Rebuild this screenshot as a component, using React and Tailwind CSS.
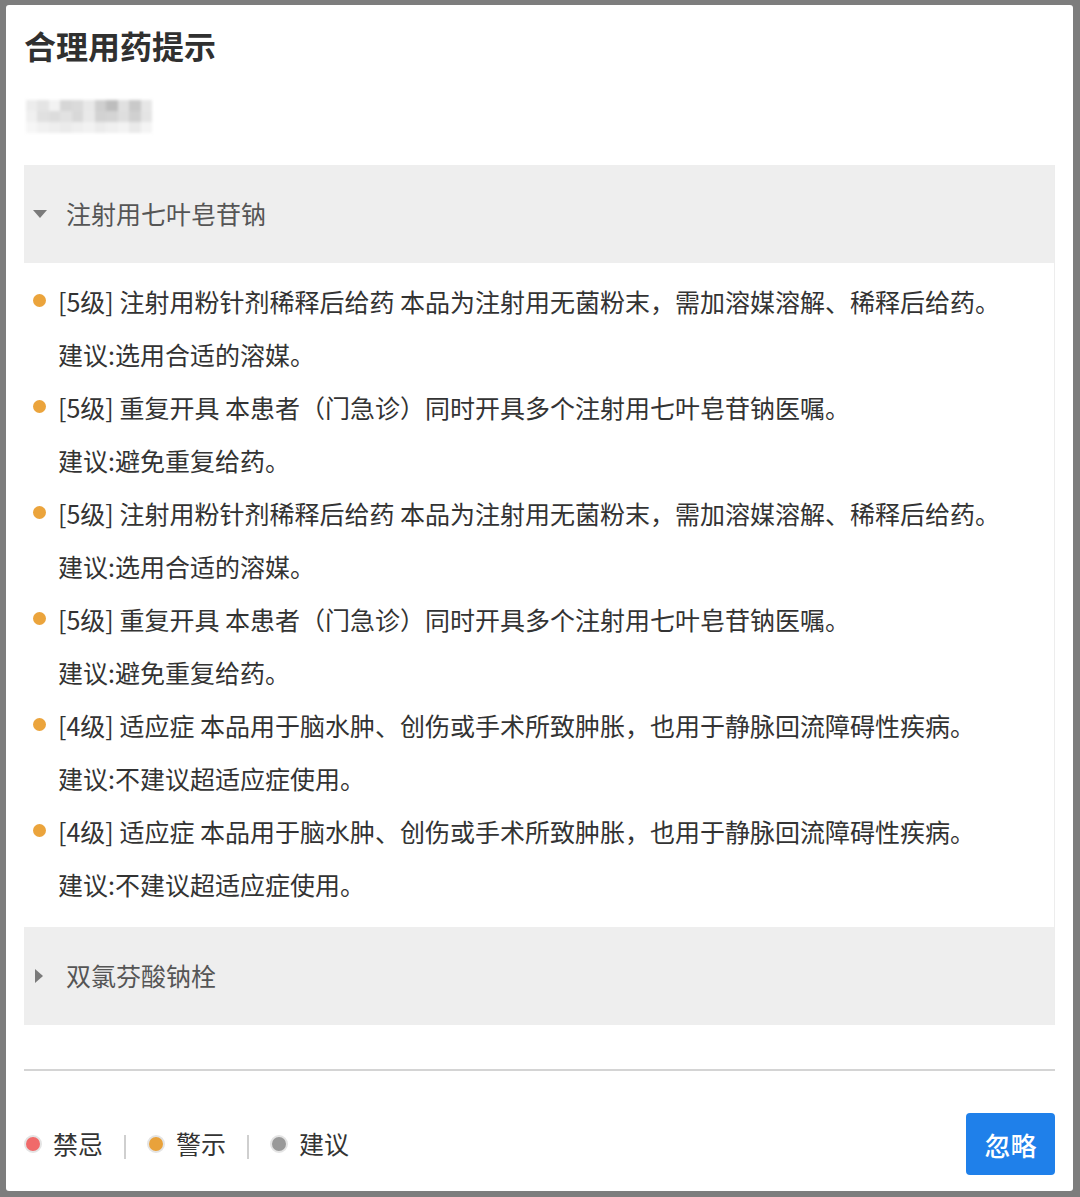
import React from "react";

const items = [
    { level: "5级", title: "注射用粉针剂稀释后给药", desc: "本品为注射用无菌粉末，需加溶媒溶解、稀释后给药。", advice: "建议:选用合适的溶媒。" },
    { level: "5级", title: "重复开具", desc: "本患者（门急诊）同时开具多个注射用七叶皂苷钠医嘱。", advice: "建议:避免重复给药。" },
    { level: "5级", title: "注射用粉针剂稀释后给药", desc: "本品为注射用无菌粉末，需加溶媒溶解、稀释后给药。", advice: "建议:选用合适的溶媒。" },
    { level: "5级", title: "重复开具", desc: "本患者（门急诊）同时开具多个注射用七叶皂苷钠医嘱。", advice: "建议:避免重复给药。" },
    { level: "4级", title: "适应症", desc: "本品用于脑水肿、创伤或手术所致肿胀，也用于静脉回流障碍性疾病。", advice: "建议:不建议超适应症使用。" },
    { level: "4级", title: "适应症", desc: "本品用于脑水肿、创伤或手术所致肿胀，也用于静脉回流障碍性疾病。", advice: "建议:不建议超适应症使用。" },
];

// pixelated patient name
const mosaic = [
    "bg-[#ececec]", "bg-[#e4e4e4]", "bg-[#f2f2f2]", "bg-[#d6d6d6]", "bg-[#dadada]", "bg-[#e8e8e8]", "bg-[#cfcfcf]", "bg-[#bdbdbd]", "bg-[#e0e0e0]", "bg-[#c9c9c9]", "bg-[#e6e6e6]",
    "bg-[#f0f0f0]", "bg-[#e0e0e0]", "bg-[#dcdcdc]", "bg-[#e2e2e2]", "bg-[#d8d8d8]", "bg-[#e9e9e9]", "bg-[#d2d2d2]", "bg-[#d4d4d4]", "bg-[#dedede]", "bg-[#d0d0d0]", "bg-[#e4e4e4]",
    "bg-[#f6f6f6]", "bg-[#f1f1f1]", "bg-[#eeeeee]", "bg-[#ebebeb]", "bg-[#efefef]", "bg-[#f2f2f2]", "bg-[#ececec]", "bg-[#f0f0f0]", "bg-[#f3f3f3]", "bg-[#eaeaea]", "bg-[#f4f4f4]",
];

function Legend({ color, label }) {
    return (
        <div className="flex items-center gap-[11px]">
            <span className={`shrink-0 w-[18px] h-[18px] rounded-full border-2 border-[#e4e4e4] ${color}`}></span>
            <span>{label}</span>
        </div>
    );
}

export default function App() {
    return (
        <div className="w-[1080px] h-[1197px] bg-[#7d7d7d] pt-[5px] pl-[6px] pr-[7px] pb-[6px] font-['Noto_Sans_CJK_SC','Noto_Sans',sans-serif]">
            <div className="h-full bg-white rounded-[3px] px-[18px] pt-[21px] pb-[16px] flex flex-col">

                {/* Title */}
                <h1 className="text-[32px] leading-[38px] font-bold text-[#303030]">合理用药提示</h1>

                {/* Patient (blurred) */}
                <div className="mt-[36px] ml-[2px] w-[126px] grid grid-cols-11 blur-[1.5px]">
                    {mosaic.map((c, i) => (
                        <div key={i} className={`h-[11px] ${c}`}></div>
                    ))}
                </div>

                {/* Drug list */}
                <div className="mt-[32px] border-r border-[#ededed]">
                    <div className="h-[98px] bg-[#eeeeee] flex items-center pl-[8px] gap-[18px] text-[25px] text-[#555]">
                        <svg width="16" height="10" viewBox="0 0 16 10"><path d="M1 1h14L8 9z" fill="#7a7a7a" /></svg>
                        <span>注射用七叶皂苷钠</span>
                    </div>

                    <ul className="pt-[12px] pb-[16px] text-[25px] leading-[53px] text-[#333]">
                        {items.map((it, i) => (
                            <li key={i}>
                                <div className="flex items-center">
                                    <span className="shrink-0 w-[13px] h-[13px] rounded-full bg-[#eba43c] ml-[9px] mr-[12px] mt-[-2px]"></span>
                                    <span>[{it.level}] {it.title} {it.desc}</span>
                                </div>
                                <div className="pl-[34px]">{it.advice}</div>
                            </li>
                        ))}
                    </ul>

                    <div className="h-[98px] bg-[#eeeeee] flex items-center pl-[10px] gap-[22px] text-[25px] text-[#555]">
                        <svg width="10" height="16" viewBox="0 0 10 16"><path d="M1 1v14l8-7z" fill="#7a7a7a" /></svg>
                        <span>双氯芬酸钠栓</span>
                    </div>
                </div>

                <div className="mt-[44px] border-t-2 border-[#d4d4d4]"></div>

                {/* Footer */}
                <div className="mt-[42px] flex items-center justify-between">
                    <div className="flex items-center text-[25px] text-[#333]">
                        <Legend color="bg-[#f06a6a]" label="禁忌" />
                        <span className="mx-[21px] w-[2px] h-[24px] bg-[#cfcfcf] mt-[6px]"></span>
                        <Legend color="bg-[#e9a23b]" label="警示" />
                        <span className="mx-[21px] w-[2px] h-[24px] bg-[#cfcfcf] mt-[6px]"></span>
                        <Legend color="bg-[#999999]" label="建议" />
                    </div>
                    <button className="w-[89px] h-[62px] rounded-[4px] bg-[#1f80ea] text-white text-[26px] font-medium">忽略</button>
                </div>
            </div>
        </div>
    );
}
